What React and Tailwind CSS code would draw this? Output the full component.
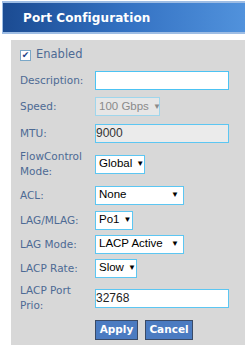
import React from "react";

const label = "text-[#4d6a94] text-[10.5px] leading-[15px]";
const box = "h-[19px] border flex items-center whitespace-nowrap";

function Select({ value, width, disabled }) {
  return (
    <div
      className={`${box} justify-between gap-[4px] pl-[3px] pr-[4px] font-['Liberation_Sans',sans-serif] text-[11.5px] ${
        disabled ? "text-[#8a8a8a] bg-[#e6e6e6] border-[#9fd6ec]" : "text-black bg-white border-[#5cc6f2]"
      }`}
      style={{ width }}
    >
      <span>{value}</span>
      <span className={`text-[8px] ${disabled ? "text-[#8a8a8a]" : "text-black"}`}>▼</span>
    </div>
  );
}

function Row({ name, children, h }) {
  return (
    <div className="flex items-center" style={{ height: h }}>
      <div className={`w-[75px] ${label}`}>{name}</div>
      {children}
    </div>
  );
}

export default function App() {
  return (
    <div className="w-[245px] h-[350px] bg-white font-['DejaVu_Sans',sans-serif] overflow-hidden pt-[1px]">
      <div className="ml-[2px] h-[33px] border-t-[2px] border-b-[2px] border-l border-[#9ebde4] bg-gradient-to-r from-[#1b4b92] via-[#3371c2] to-[#5192dc] flex items-center pl-[20px]">
        <span className="text-white font-bold text-[12px] tracking-[0.1px]">Port Configuration</span>
      </div>
      <div className="mt-[6px] ml-[11px] h-[305px] bg-[#d8d8d8] pl-[9px] pt-[9px]">
        <div className="flex items-center h-[12px] mb-[6px]">
          <div className="w-[11px] h-[11px] bg-white border border-[#7aa7c7] flex items-center justify-center text-[#1e3f86] text-[9px] font-bold leading-none">
            ✔
          </div>
          <span className="ml-[5px] text-[#4d6a94] text-[11.5px]">Enabled</span>
        </div>
        <div className="flex flex-col">
          <Row name="Description:" h={26}>
            <div className={`${box} w-[134px] bg-white border-[#4cc3f3]`} />
          </Row>
          <Row name="Speed:" h={27}>
            <Select value="100 Gbps" width={65} disabled />
          </Row>
          <Row name="MTU:" h={26}>
            <div className={`${box} w-[134px] bg-[#ebebeb] border-[#5cc6f2] font-['Liberation_Sans',sans-serif] text-[12px] text-[#333]`}>9000</div>
          </Row>
          <Row name={<>FlowControl<br />Mode:</>} h={36}>
            <Select value="Global" width={50} />
          </Row>
          <Row name="ACL:" h={26}>
            <Select value="None" width={89} />
          </Row>
          <Row name="LAG/MLAG:" h={24}>
            <Select value="Po1" width={38} />
          </Row>
          <Row name="LAG Mode:" h={24}>
            <Select value="LACP Active" width={89} />
          </Row>
          <Row name="LACP Rate:" h={24}>
            <Select value="Slow" width={42} />
          </Row>
          <Row name={<>LACP Port<br />Prio:</>} h={36}>
            <div className={`${box} w-[134px] bg-white border-[#5cc6f2] font-['Liberation_Sans',sans-serif] text-[12px] text-[#222]`}>32768</div>
          </Row>
        </div>
        <div className="flex gap-[7px] ml-[75px] mt-[4px]">
          <button className="h-[20px] w-[43px] px-0 bg-[#4b7bc1] border border-[#3a4a66] text-white font-bold text-[10.5px]">Apply</button>
          <button className="h-[20px] w-[48px] px-0 bg-[#4b7bc1] border border-[#3a4a66] text-white font-bold text-[10.5px]">Cancel</button>
        </div>
      </div>
    </div>
  );
}
